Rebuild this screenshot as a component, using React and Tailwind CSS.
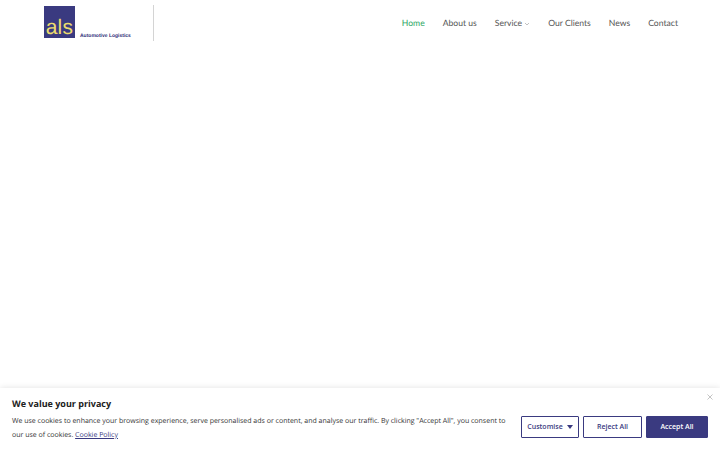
import React from "react";

const nav = [
  ["Home", "text-[#2fa866]"],
  ["About us", "text-[#555555]"],
  ["Service", "text-[#555555]"],
  ["Our Clients", "text-[#555555]"],
  ["News", "text-[#555555]"],
  ["Contact", "text-[#555555]"],
];

export default function App() {
  return (
    <div className="relative h-[450px] w-[720px] overflow-hidden bg-white font-['Open_Sans',sans-serif] [text-rendering:geometricPrecision]">
      <header className="flex h-[46px] items-start pl-[44px] pr-[42px] pt-[5px]">
        <div className="flex h-[36px] w-[110px] items-start border-r border-[#d4d4d4]">
          <div className="mt-[1px] flex h-[32px] w-[31px] items-end justify-center bg-[#3a3a80] font-['Liberation_Sans',sans-serif] text-[21px] leading-[21px] tracking-[0.3px] text-[#ecdc6e]">
            als
          </div>
          <div className="ml-[5px] mt-[28px] whitespace-nowrap font-['Liberation_Sans',sans-serif] text-[5px] font-bold leading-[6px] text-[#2f2f78]">
            Automotive Logistics
          </div>
        </div>
        <nav className="ml-auto mt-[12px] flex items-center gap-[18px] font-['Lato',sans-serif] text-[8.6px] leading-[13px]">
          {nav.map(([label, color]) => (
            <span key={label} className={`flex items-center gap-[2px] ${color}`}>
              {label}
              {label === "Service" && (
                <svg width="6" height="6" viewBox="0 0 6 6" fill="none" stroke="#999999" strokeWidth="0.6">
                  <path d="M1 2l2 2 2-2" />
                </svg>
              )}
            </span>
          ))}
        </nav>
      </header>
      <div className="absolute bottom-0 left-0 right-0 h-[62px] bg-white px-[12px] pt-[9px] shadow-[0_0_6px_rgba(0,0,0,0.12)]">
        <h2 className="text-[9px] font-bold leading-[14px] text-[#212121]">We value your privacy</h2>
        <div className="mt-[4px] flex items-start">
          <p className="w-[498px] text-[7px] leading-[13.5px] text-[#333333]">
            We use cookies to enhance your browsing experience, serve personalised ads or content, and analyse our traffic. By clicking "Accept All", you consent to our use of cookies.{" "}
            <a className="text-[#3a3a80] underline">Cookie Policy</a>
          </p>
          <div className="ml-[11px] mt-[1px] flex gap-[4px] text-[7px] font-semibold">
            <button className="flex h-[22px] w-[58px] items-center justify-center gap-[4px] rounded-[1px] border border-[#3a3a80] text-[#3a3a80]">
              Customise
              <svg width="6" height="4" viewBox="0 0 6 4" fill="#3a3a80"><path d="M0 0h6L3 4z" /></svg>
            </button>
            <button className="h-[22px] w-[59px] rounded-[1px] border border-[#3a3a80] text-[#3a3a80]">Reject All</button>
            <button className="h-[22px] w-[62px] rounded-[1px] border border-[#3a3a80] bg-[#3a3a80] text-white">Accept All</button>
          </div>
        </div>
        <svg className="absolute right-[7px] top-[6px]" width="6" height="6" viewBox="0 0 6 6" stroke="#aaaaaa" strokeWidth="0.7">
          <path d="M0.5 0.5l5 5M5.5 0.5l-5 5" />
        </svg>
      </div>
    </div>
  );
}
